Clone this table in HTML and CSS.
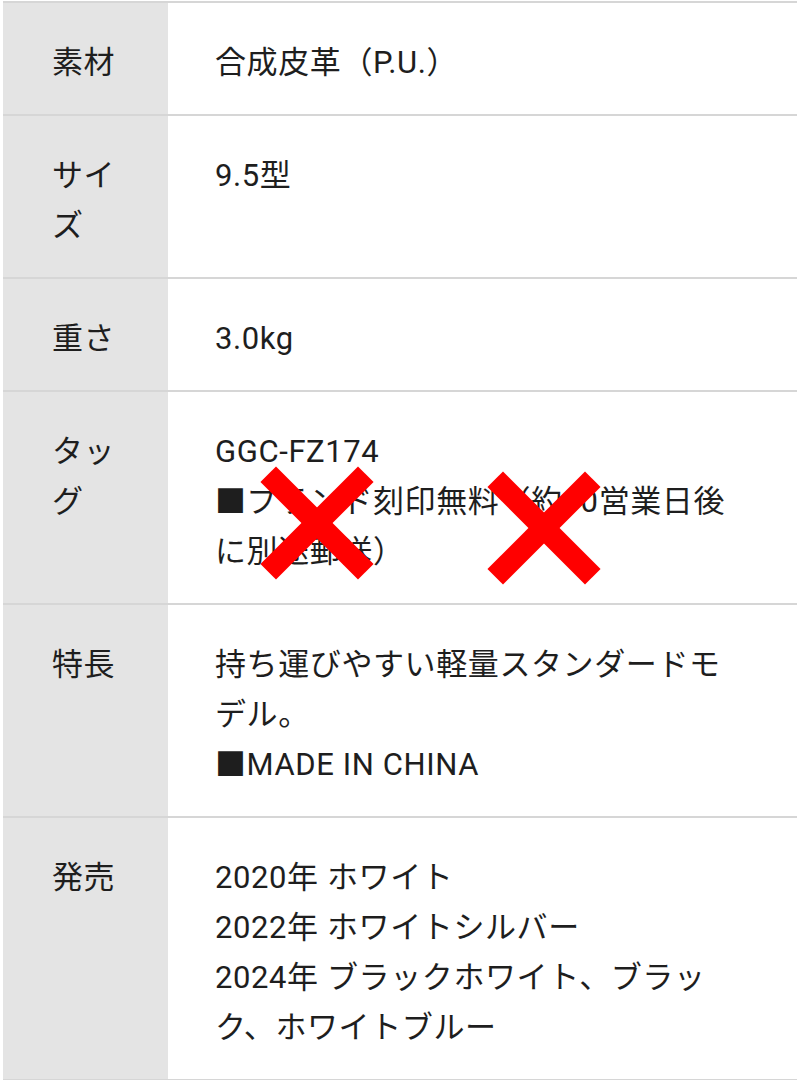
FILE: index.html
```html
<!DOCTYPE html>
<html lang="ja">
<head>
<meta charset="utf-8">
<link rel="stylesheet" href="styles.css">
</head>
<body>
<table class="spec">
  <tr>
    <th>素材</th>
    <td>合成皮革（P.U.）</td>
  </tr>
  <tr>
    <th>サイズ</th>
    <td>9.5型</td>
  </tr>
  <tr>
    <th>重さ</th>
    <td>3.0kg</td>
  </tr>
  <tr>
    <th>タッグ</th>
    <td class="tag-cell">GGC-FZ174<br>■ブランド刻印無料（約10営業日後に別途郵送）
      <span class="cross cross-a"></span>
      <span class="cross cross-b"></span>
    </td>
  </tr>
  <tr>
    <th>特長</th>
    <td>持ち運びやすい軽量スタンダードモデル。<br>■MADE IN CHINA</td>
  </tr>
  <tr>
    <th>発売</th>
    <td>2020年 ホワイト<br>2022年 ホワイトシルバー<br>2024年 ブラックホワイト、ブラック、ホワイトブルー</td>
  </tr>
</table>
</body>
</html>
```

FILE: styles.css
```css
html, body {
  margin: 0;
  padding: 0;
  background: #ffffff;
}

body {
  font-family: Roboto, "Noto Sans CJK JP", sans-serif;
  color: #1e1e1e;
  font-size: 31px;
  line-height: 50px;
  letter-spacing: 0.6px;
}

.spec {
  margin: 1px 0 0 3px;
  width: 794px;
  border-collapse: collapse;
  table-layout: fixed;
}

.spec tr {
  border-top: 2px solid #d6d6d6;
  border-bottom: 2px solid #d6d6d6;
}

.spec th {
  width: 165px;
  box-sizing: border-box;
  background: #e4e4e4;
  font-weight: normal;
  text-align: left;
  vertical-align: top;
  padding: 35px 46px 26px 49px;
  word-break: break-all;
}

.spec td {
  vertical-align: top;
  padding: 35px 65px 26px 47px;
}

.tag-cell {
  position: relative;
}

.cross {
  position: absolute;
  width: 116px;
  height: 116px;
}

.cross::before,
.cross::after {
  content: "";
  position: absolute;
  left: -11px;
  top: 47px;
  width: 138px;
  height: 22px;
  background: #ff0000;
  transform: rotate(45deg);
}

.cross::after {
  transform: rotate(-45deg);
}

.cross-a {
  left: 91px;
  top: 73px;
}

.cross-b {
  left: 318px;
  top: 78px;
}
```
